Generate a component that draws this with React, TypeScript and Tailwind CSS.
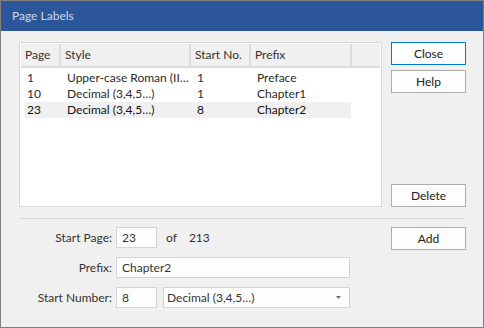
import React from "react";

const font = { fontFamily: '"Segoe UI", Lato, "Liberation Sans", sans-serif' };

type Row = { page: string; style: string; start: string; prefix: string; selected?: boolean };

const rows: Row[] = [
  { page: "1", style: "Upper-case Roman (II…", start: "1", prefix: "Preface" },
  { page: "10", style: "Decimal (3,4,5…)", start: "1", prefix: "Chapter1" },
  { page: "23", style: "Decimal (3,4,5…)", start: "8", prefix: "Chapter2", selected: true },
];

function Button({ label, primary }: { label: string; primary?: boolean }) {
  return (
    <button
      className={
        primary
          ? "h-[23px] w-[75px] border border-[#0078d7] bg-[#fdfdfd] text-[12px] text-[#222]"
          : "h-[23px] w-[75px] border border-[#adadad] bg-[#fdfdfd] text-[12px] text-[#222]"
      }
    >
      {label}
    </button>
  );
}

export default function App() {
  return (
    <div
      style={font}
      className="flex h-[328px] w-[484px] flex-col border border-[#7f7f7f] bg-[#f0f0f0] text-[12px] text-[#1e1e1e]"
    >
      {/* Title bar */}
      <div className="flex h-[30px] shrink-0 items-center bg-[#2b579a] pl-[11px] pb-[1px] text-[12px] text-[#cdd7ea]">
        Page Labels
      </div>

      <div className="flex flex-col pl-[18px] pt-[11px]">
        {/* List + side buttons */}
        <div className="flex">
          <div className="h-[165px] w-[363px] border border-[#d9d9d9] bg-white p-[1px]">
            <div className="flex h-[24px] bg-[#f0f0f0] text-[#333]">
              <div className="flex w-[40px] items-center border-r-2 border-b-2 border-[#dcdcdc] pl-[4px]">Page</div>
              <div className="flex w-[130px] items-center border-r-2 border-b-2 border-[#dcdcdc] pl-[4px]">Style</div>
              <div className="flex w-[60px] items-center border-r-2 border-b-2 border-[#dcdcdc] pl-[4px]">Start No.</div>
              <div className="flex w-[101px] items-center border-r-2 border-b-2 border-[#dcdcdc] pl-[4px]">Prefix</div>
              <div className="flex-1 border-b-2 border-[#dcdcdc]" />
            </div>
            <div className="mt-[2px] ml-[4px] w-[326px]">
              {rows.map((r) => (
                <div
                  key={r.page}
                  className={
                    r.selected
                      ? "flex h-[16px] items-center bg-[#f0f0f0] text-[#111]"
                      : "flex h-[16px] items-center text-[#2a2a2a]"
                  }
                >
                  <div className="w-[36px] pl-[2px]">{r.page}</div>
                  <div className="w-[130px] pl-[6px] whitespace-nowrap">{r.style}</div>
                  <div className="w-[60px] pl-[6px]">{r.start}</div>
                  <div className="w-[100px] pl-[6px]">{r.prefix}</div>
                </div>
              ))}
            </div>
          </div>

          <div className="ml-[9px] flex h-[165px] flex-col">
            <Button label="Close" primary />
            <div className="mt-[5px]">
              <Button label="Help" />
            </div>
            <div className="mt-auto">
              <Button label="Delete" />
            </div>
          </div>
        </div>

        {/* Separator */}
        <div className="mt-[11px] h-px w-[446px] bg-[#d5d5d5]" />

        {/* Form */}
        <div className="mt-[8px] flex">
          <div className="flex w-[363px] flex-col gap-[9px] text-[#333]">
            <div className="flex h-[21px] items-center">
              <div className="w-[97px] pr-[4px] text-right">Start Page:</div>
              <div className="flex h-[21px] w-[41px] items-center border border-[#d4d4d4] bg-[#fdfdfd] pl-[5px]">23</div>
              <span className="ml-[9px]">of</span>
              <span className="ml-[12px]">213</span>
            </div>
            <div className="flex h-[21px] items-center">
              <div className="w-[97px] pr-[4px] text-right">Prefix:</div>
              <div className="flex h-[21px] w-[234px] items-center border border-[#d4d4d4] bg-[#fdfdfd] pl-[5px]">Chapter2</div>
            </div>
            <div className="flex h-[21px] items-center">
              <div className="w-[97px] pr-[4px] text-right">Start Number:</div>
              <div className="flex h-[21px] w-[41px] items-center border border-[#d4d4d4] bg-[#fdfdfd] pl-[5px]">8</div>
              <div className="ml-[6px] flex h-[21px] w-[187px] items-center justify-between border border-[#d4d4d4] bg-[#fdfdfd] pl-[3px] pr-[8px]">
                <span>Decimal (3,4,5…)</span>
                <svg width="5" height="3" viewBox="0 0 5 3">
                  <path d="M0 0H5L2.5 3Z" fill="#707070" />
                </svg>
              </div>
            </div>
          </div>
          <div className="ml-[9px]">
            <Button label="Add" />
          </div>
        </div>
      </div>
    </div>
  );
}
